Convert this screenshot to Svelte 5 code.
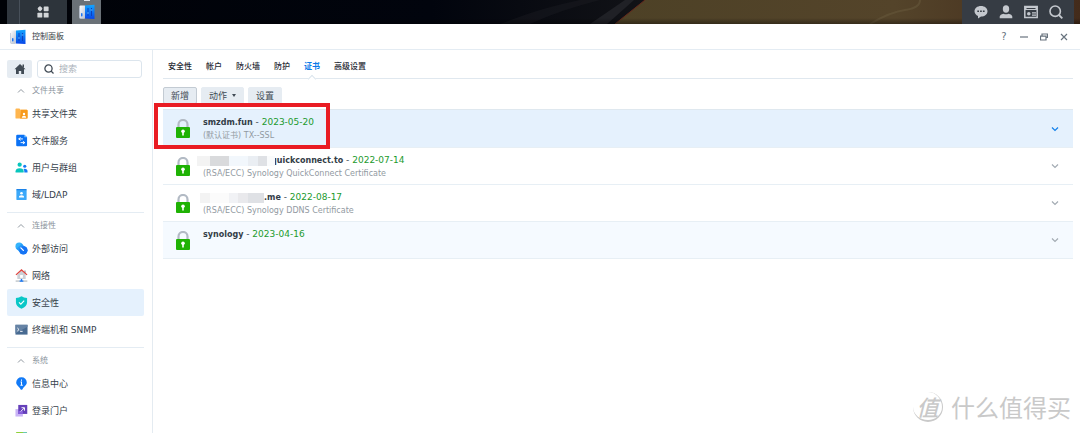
<script>
  const groups = [
    {
      title: '文件共享',
      items: [
        { icon: 'folder', label: '共享文件夹' },
        { icon: 'service', label: '文件服务' },
        { icon: 'users', label: '用户与群组' },
        { icon: 'domain', label: '域/LDAP' }
      ]
    },
    {
      title: '连接性',
      items: [
        { icon: 'external', label: '外部访问' },
        { icon: 'network', label: '网络' },
        { icon: 'shield', label: '安全性', active: true },
        { icon: 'terminal', label: '终端机和 SNMP' }
      ]
    },
    {
      title: '系统',
      items: [
        { icon: 'info', label: '信息中心' },
        { icon: 'portal', label: '登录门户' },
        { icon: 'region', label: '' }
      ]
    }
  ];
  const tabs = ['安全性', '帐户', '防火墙', '防护', '证书', '高级设置'];
  const certs = [
    { name: 'smzdm.fun', date: '2023-05-20', note: '(默认证书) TX--SSL', state: 'selected' },
    { name: 'quickconnect.to', date: '2022-07-14', note: '(RSA/ECC) Synology QuickConnect Certificate', mask: 'wide' },
    { name: '.me', date: '2022-08-17', note: '(RSA/ECC) Synology DDNS Certificate', mask: 'narrow' },
    { name: 'synology', date: '2023-04-16', note: '', state: 'hover' }
  ];
</script>

{#snippet panelIcon()}
  <svg class="panel-icon" viewBox="0 0 16 16" aria-hidden="true">
    <defs>
      <linearGradient id="pb" x1="0" y1="0" x2="0" y2="1"><stop offset="0" stop-color="#13a5ff" /><stop offset="1" stop-color="#0745e8" /></linearGradient>
      <linearGradient id="pw" x1="0" y1="0" x2="1" y2="1"><stop offset="0" stop-color="#ffffff" /><stop offset="1" stop-color="#b3bdcf" /></linearGradient>
    </defs>
    <rect x="0.5" y="1.5" width="6" height="13" rx="1" fill="url(#pw)" />
    <path d="M.5 4v9.500q0 1 1 1h4" fill="none" stroke="#b9c3d4" stroke-width=".7" />
    <rect x="2" y="9" width="1.500" height="3.500" rx=".7" fill="#1d74f4" />
    <path d="M6 1.500 15.500.8V15L6 14.500z" fill="url(#pb)" />
    <path d="M9 4v8M12.500 4v8" stroke="#0a41bd" stroke-width="1" />
    <path d="M8.200 9h1.600M11.700 6h1.600" stroke="#6cc6ff" stroke-width="1.200" />
  </svg>
{/snippet}

{#snippet sideIcon(kind)}
  <svg class="side-icon" viewBox="0 0 14 14" aria-hidden="true">
    {#if kind === 'folder'}
      <path d="M.5 2.500q0-1 1-1h3.300l1.200 1.500h6.500q1 0 1 1V11.500q0 1-1 1h-11q-1 0-1-1z" fill="#ffb64f" />
      <path d="M6.500 3h6q1 0 1 1V11.500q0 1-1 1h-7z" fill="#f79a1c" />
      <circle cx="9.700" cy="7.500" r="1.300" fill="#fff" /><path d="M7.300 11.500q0-2 2.400-2t2.400 2z" fill="#fff" />
    {:else if kind === 'service'}
      <path d="M2.500.8H10L13 3.500V12q0 1.200-1.200 1.200H2.500q-1.200 0-1.200-1.200V2Q1.300.8 2.500.8z" fill="#0b72f5" />
      <path d="M10 .8 13 3.500h-3z" fill="#75c0ff" />
      <path d="M6 3.800 4 5.300l2 1.500M4 5.300h4.500M8.500 7.800l2 1.500-2 1.500M10.500 9.300H6" fill="none" stroke="#fff" stroke-width="1" />
    {:else if kind === 'users'}
      <circle cx="5" cy="4" r="2.300" fill="#08c6bd" /><path d="M.6 12.500V11Q.8 7.700 5 7.700T9.300 11v1.500z" fill="#08c6bd" />
      <circle cx="10.500" cy="5.700" r="1.700" fill="#147bf5" /><path d="M9 8.600q4.500-.7 4.500 2.700v1.200H10V11Q10 9.500 9 8.600z" fill="#147bf5" />
    {:else if kind === 'domain'}
      <rect x="1.500" y="1" width="11" height="12" rx="1" fill="#3ba8f9" /><path d="M1.500 2.500V2q0-1 1-1h9q1 0 1 1v.500z" fill="#1c82e8" />
      <circle cx="7" cy="5.700" r="1.400" fill="#fff" /><path d="M4.200 10.300q0-2.600 2.800-2.600t2.800 2.600z" fill="#fff" />
    {:else if kind === 'external'}
      <circle cx="4.500" cy="4.500" r="4" fill="#35b4fc" /><circle cx="9" cy="9" r="4.500" fill="#1574f5" />
      <path d="M1.500 7.300 6.500 12.500 10.500 5 7.300 1.800z" fill="#269af9" /><circle cx="9" cy="9" r="4.300" fill="#1574f5" />
      <path d="M6.300 6.300 9 9" stroke="#fff" stroke-width="1.400" stroke-linecap="round" />
    {:else if kind === 'network'}
      <path d="M2.500 6 7 2l4.500 4v4.800h-9z" fill="#cbd0d6" /><path d="M10 1.500h1.500v3H10z" fill="#a3a8ae" />
      <path d="M1 6.300 7 1l6 5.300" fill="none" stroke="#df453f" stroke-width="1.300" />
      <rect x="5.500" y="6.500" width="3" height="3" fill="#fff" /><path d="M.7 13h12.600" stroke="#9ea6ad" stroke-width="1" /><path d="M7 10.800v2M5 13h4" stroke="#1675f4" stroke-width="1.500" />
    {:else if kind === 'shield'}
      <path d="M7 .4Q9.500 2 13 2.200V7q0 4.200-6 6.800Q1 11.200 1 7V2.200Q4.500 2 7 .4z" fill="#0ac7c7" /><path d="M4.300 6.800 6.300 8.800 9.900 5" stroke="#fff" stroke-width="1.200" fill="none" />
    {:else if kind === 'terminal'}
      <path d="M.5 2h13v10.500H.5z" fill="#486a91" /><path d="M.5 2h13v2L.5 11z" fill="#6683a5" /><path d="M2.500 5.300 4.300 7 2.500 8.700M5.500 9h2.700" fill="none" stroke="#fff" />
    {:else if kind === 'info'}
      <path d="M7 .3a5.600 5.600 0 0 1 5.700 5.600c0 3-3 4.200-4.500 6.900Q7 14.600 5.800 12.800C4.300 10.100 1.300 8.900 1.300 5.900A5.600 5.600 0 0 1 7 .3z" fill="#127af7" /><path d="M7 2.700v1.400M6 5.500h1v3M5.800 8.800h2.600" stroke="#fff" fill="none" stroke-width="1.100" />
    {:else if kind === 'portal'}
      <path d="M.5 5.500h8v8h-8z" fill="#c9b3f6" /><path d="M3.500 1h9.700v9.700H3.500z" fill="#6540ba" /><path d="M3.500 7.500h5v3.200h-5z" fill="#8860dc" /><path d="M6.200 8 10 4.200M7 4h3.200v3.200" fill="none" stroke="#fff" />
    {:else}
      <rect x="1" y="1" width="12" height="12" rx="1" fill="#8fd03a" /><path d="M8 1h4q1 0 1 1v4z" fill="#68c8b8" />
    {/if}
  </svg>
{/snippet}

<div class="screen">
  <header class="taskbar">
    <svg class="wallpaper" viewBox="0 0 1080 24" preserveAspectRatio="none" aria-hidden="true">
      <defs>
        <linearGradient id="night"><stop offset="0" stop-color="#000207" /><stop offset=".4" stop-color="#01040d" /><stop offset=".6" stop-color="#121317" /></linearGradient>
        <linearGradient id="sand"><stop offset="0" stop-color="#4d4126" /><stop offset=".6" stop-color="#54442a" /><stop offset="1" stop-color="#432b1b" /></linearGradient>
        <linearGradient id="shade" x1="0" x2="0" y1="0" y2="1"><stop offset=".75" stop-opacity="0" /><stop offset="1" stop-opacity=".35" /></linearGradient>
      </defs>
      <path d="M0 0h1080v24H0z" fill="url(#night)" />
      <path d="M500 24Q540 8 580 0h20Q560 10 530 24z" fill="#24262b" opacity=".3" />
      <path d="M590 24 625 0h9L607 24z" fill="#24262b" opacity=".8" />
      <path d="M645 0h435v24H615z" fill="url(#sand)" />
      <path d="M645 0 615 24" stroke="#65291c" />
      <path d="M870 24Q890 12 905 10T920 0" stroke="#65563a" stroke-width="2" fill="none" opacity=".6" />
      <path d="M0 0h1080v24H0z" fill="url(#shade)" />
    </svg>
    <button class="launcher" aria-label="主菜单">
      <svg viewBox="0 0 12 12" aria-hidden="true"><path d="M3 0 5.500 2.750 3 5.500.5 2.750z" /><circle cx="3" cy="2.750" r="2.100" /><rect x="6.700" y=".4" width="4.900" height="4.900" rx=".7" /><rect x=".4" y="6.700" width="4.900" height="4.900" rx=".7" /><rect x="6.700" y="6.700" width="4.900" height="4.900" rx=".7" /></svg>
    </button>
    <button class="running" aria-label="控制面板">{@render panelIcon()}</button>
    <div class="tray">
      <button aria-label="通知"><svg viewBox="0 0 14 14" aria-hidden="true"><path d="M7 1c3.700 0 6.500 2.200 6.500 5.300S10.700 11.600 7 11.600L4 13.500V11C2 10.200.5 8.400.5 6.300.5 3.200 3.300 1 7 1z" /><path d="M3.300 5.500h1.700v1.500H3.300zM6.100 5.500h1.700v1.500H6.100zM8.900 5.500h1.700v1.500H8.900z" fill="#363c44" /></svg></button>
      <button aria-label="用户"><svg viewBox="0 0 14 14" aria-hidden="true"><ellipse cx="7" cy="4" rx="3.200" ry="3.700" /><path d="M.7 13.200V11.500Q1 9.500 4.500 8.700q2.500 1.300 5 0 3.500.8 3.800 2.800v1.700z" /></svg></button>
      <button aria-label="小工具"><svg viewBox="0 0 14 14" aria-hidden="true"><path d="M.8 1.500h12.400v11H.8z" fill="none" stroke="#c4c8ce" stroke-width="1.500" /><path d="M1 1h12v4H1z" /><path d="M2.500 3.500h9" stroke="#363c44" /><circle cx="4.800" cy="8.800" r="1.800" /><path d="M8 7.800h4M8 10.200h4" stroke="#c4c8ce" stroke-width="1.300" /></svg></button>
      <button aria-label="搜索"><svg viewBox="0 0 14 14" aria-hidden="true"><circle cx="6.200" cy="6.200" r="5.200" fill="none" stroke="#c4c8ce" stroke-width="1.600" /><path d="M10 10 13.300 13.300" stroke="#c4c8ce" stroke-width="1.800" /></svg></button>
    </div>
  </header>

  <div class="titlebar">
    {@render panelIcon()}
    <h1>控制面板</h1>
    <div class="window-controls">
      <button aria-label="帮助">?</button>
      <button aria-label="最小化"><svg viewBox="0 0 8 8" aria-hidden="true"><path d="M0 4h8" /></svg></button>
      <button aria-label="还原"><svg viewBox="0 0 8 8" aria-hidden="true"><path d="M2 2.500V1h5.500v3.500H6M.5 3.200H6V7H.5z" /></svg></button>
      <button aria-label="关闭"><svg viewBox="0 0 8 8" aria-hidden="true"><path d="M1 1l6 6M7 1 1 7" /></svg></button>
    </div>
  </div>

  <div class="body">
    <aside>
      <div class="side-top">
        <button class="home" aria-label="主页"><svg viewBox="0 0 12 12" aria-hidden="true"><path d="M6 1 11.500 6.300H10V11H7.200V8H4.800v3H2V6.300H.5z" /><path d="M8.500 1.500H10v3H8.500z" /></svg></button>
        <label class="search">
          <svg viewBox="0 0 10 10" aria-hidden="true"><circle cx="4.500" cy="4.500" r="3.600" /><path d="M7 7 9.500 9.500" /></svg>
          <input type="text" placeholder="搜索" aria-label="搜索" />
        </label>
      </div>
      <nav>
        {#each groups as group}
          <section>
            <button class="group-title"><svg viewBox="0 0 8 6" aria-hidden="true"><path d="M1 4.500 4 1.500l3 3" /></svg>{group.title}</button>
            {#each group.items as item}
              <a href="#panel" class:active={item.active}>{@render sideIcon(item.icon)}<span>{item.label}</span></a>
            {/each}
          </section>
        {/each}
      </nav>
    </aside>

    <main id="panel">
      <div class="tabs" role="tablist">
        {#each tabs as tab}
          <button role="tab" aria-selected={tab === '证书'}>{tab}</button>
        {/each}
      </div>
      <div class="toolbar">
        <button class="focused">新增</button>
        <button>动作<i></i></button>
        <button>设置</button>
      </div>
      <ul>
        {#each certs as cert}
          <li class={cert.state}>
            <svg class="lock" viewBox="0 0 14 19" aria-hidden="true"><path d="M2.500 9V5.500a4.500 4.500 0 0 1 9 0V9" fill="none" stroke="#b2bac4" stroke-width="2.200" /><rect y="8" width="14" height="11" rx="1" fill="#1fb204" /><circle cx="7" cy="12.300" r="1.800" fill="#fff" /><path d="M6.200 13h1.600v3.500H6.200z" fill="#fff" /></svg>
            <div class="info">
              <p>
                {#if cert.mask}<span class="mask {cert.mask}"></span>{/if}<b>{cert.name}</b> - <time>{cert.date}</time>
              </p>
              {#if cert.note}<p class="note">{cert.note}</p>{/if}
            </div>
            <button class="expand" aria-label="展开"><svg viewBox="0 0 8 6" aria-hidden="true"><path d="M1 1.500l3 3 3-3" /></svg></button>
            {#if cert.state === 'selected'}<div class="highlight"></div>{/if}
          </li>
        {/each}
      </ul>
    </main>
  </div>

  <div class="watermark"><span class="seal">值</span><span>什么值得买</span></div>
</div>

<style>
  :global(body) { margin: 0; background: #fff; }
  .screen {
    position: relative;
    display: flex;
    flex-direction: column;
    height: 100vh;
    overflow: hidden;
    background: #fff;
    color: #414b55;
    font: 9px/12px "DejaVu Sans", "Noto Sans CJK SC", sans-serif;
  }
  button { border: 0; margin: 0; padding: 0; background: none; color: inherit; font: inherit; }
  svg { display: block; flex: none; }
  p, h1, ul { margin: 0; padding: 0; }
  h1 { font-size: 8px; font-weight: 400; color: #333b44; }

  .taskbar { position: relative; display: flex; flex: none; height: 24px; background: #000; overflow: hidden; }
  .wallpaper { position: absolute; inset: 0; width: 100%; height: 100%; }
  .taskbar button, .tray { position: relative; display: flex; align-items: center; justify-content: center; }
  .launcher { width: 48px; margin-left: 7px; border-left: 12px solid #30373f; background: #2d343b; box-shadow: inset 1px 0 #48505a; box-sizing: content-box; }
  .launcher svg { width: 12px; height: 12px; fill: #d2d5d8; }
  .running { width: 29px; margin-left: 5px; background: #6a7177; }
  .running::before { content: ""; position: absolute; top: 0; left: 12px; width: 6px; height: 1px; background: #e3e5e8; }
  .panel-icon { width: 16px; height: 16px; }
  .tray { gap: 11px; width: 112px; margin-left: auto; margin-right: 6px; background: #363c44; }
  .tray svg { width: 14px; height: 14px; fill: #c4c8ce; }

  .titlebar { display: flex; flex: none; align-items: center; gap: 6px; height: 25px; padding: 0 10px; border-bottom: 1px solid #e4ecf3; }
  .window-controls { display: flex; gap: 8px; margin-left: auto; }
  .window-controls button { display: flex; align-items: center; justify-content: center; width: 12px; height: 12px; color: #68737e; font-size: 10px; }
  .window-controls svg { width: 8px; height: 8px; fill: none; stroke: #68737e; stroke-width: 1.2; }

  .body { display: flex; flex: 1; min-height: 0; }
  aside { flex: none; width: 153px; padding: 10px 8px 0 7px; border-right: 1px solid #e4ebf1; box-sizing: border-box; }
  .side-top { display: flex; gap: 5px; height: 18px; padding-right: 2px; }
  .home { display: flex; align-items: center; justify-content: center; width: 25px; border-radius: 2px; background: #e6ecf2; }
  .home svg { width: 12px; height: 12px; fill: #414b55; }
  .search { display: flex; flex: 1; min-width: 0; align-items: center; gap: 5px; padding-left: 6px; border: 1px solid #dce5ed; border-radius: 3px; box-sizing: border-box; }
  .search svg { width: 10px; height: 10px; fill: none; stroke: #414b55; stroke-width: 1.3; }
  .search input { flex: 1; min-width: 0; border: 0; padding: 0; background: none; font: inherit; outline: 0; }
  .search input::placeholder { color: #aab2ba; opacity: 1; }

  nav { padding-top: 4px; }
  section + section { margin-top: 4px; padding-top: 4px; border-top: 1px solid #e4ecf3; }
  .group-title { display: flex; align-items: center; gap: 7px; height: 18px; padding-left: 10px; color: #8a939c; font-size: 8px; }
  .group-title svg { width: 8px; height: 6px; fill: none; stroke: #929aa2; }
  nav a { display: flex; align-items: center; gap: 4px; height: 27px; padding-left: 8px; border-radius: 2px; color: #36414b; text-decoration: none; white-space: nowrap; }
  nav a.active { background: #e5f1fd; }
  .side-icon { width: 13px; height: 13px; }

  main { flex: 1; min-width: 0; padding: 7px 7px 0 10px; }
  .tabs { display: flex; gap: 14px; height: 21px; padding-left: 5px; border-bottom: 1px solid #e0e8ef; font-size: 8px; color: #1f2933; }
  .tabs button { position: relative; height: 19px; font-weight: 500; }
  .tabs [aria-selected="true"] { color: #0b7be8; font-weight: 700; }
  .tabs [aria-selected="true"]::after { content: ""; position: absolute; left: 50%; bottom: -6px; width: 5px; height: 5px; margin-left: -3px; border: solid #dbe5ed; border-width: 1px 0 0 1px; background: #fff; transform: rotate(45deg); }
  .toolbar { display: flex; gap: 4px; padding: 8px 0 5px; }
  .toolbar button { display: flex; align-items: center; gap: 5px; height: 17px; padding: 0 7px; border: 1px solid #e6ecf2; border-radius: 2px; background: #e6ecf2; color: #414b55; font-size: 9px; }
  .toolbar .focused { border-color: #c3cbd3; }
  .toolbar i { border: 2px solid transparent; border-top: 3px solid #414b55; border-bottom: 0; }

  ul { list-style: none; border-top: 1px solid #dfe8ef; }
  li { position: relative; display: flex; height: 37px; padding: 0 14px 0 13px; border-bottom: 1px solid #e7eff5; box-sizing: border-box; }
  li.selected { height: 38px; background: #e5f1fd; }
  .hover { background: #f5faff; }
  .lock { width: 14px; height: 19px; margin-top: 9px; }
  .info { flex: 1; margin-left: 13px; padding-top: 5px; line-height: 14px; white-space: nowrap; color: #414b55; }
  .info p { height: 14px; }
  b { color: #333d47; font-size: 8px; }
  time { color: #1c9a2d; }
  .info .note { color: #929aa2; font-size: 8px; }
  .mask { position: relative; z-index: 1; display: inline-block; height: 10px; vertical-align: middle; }
  .wide { width: 78px; margin: 0 -4px 0 -6px; background: linear-gradient(90deg, #f3f3f3 13px, #d9dadc 13px 32px, #f2f7fc 32px 51px, #eaeef3 51px 61px, #dfe1e5 61px 70px, #fafbfc 70px); }
  .narrow { width: 64px; margin-left: -3px; background: linear-gradient(90deg, #f3f3f3 10px, #fbfbfb 10px 29px, #f1f2f5 29px 38px, #e9e9ec 38px 48px, #dfe1e5 48px); }
  .expand { align-self: center; }
  .expand svg { width: 8px; height: 6px; fill: none; stroke: #a3abb3; stroke-width: 1.2; }
  .selected .expand svg { stroke: #1280ea; }
  .highlight { position: absolute; top: -7px; left: -9px; width: 168px; height: 38px; border: 4px solid #e91c23; pointer-events: none; }

  .watermark { position: absolute; right: 9px; bottom: 10px; display: flex; align-items: center; gap: 8px; color: #c9c9c9; font: 400 24px/32px "Noto Sans CJK SC", sans-serif; pointer-events: none; }
  .seal { width: 30px; height: 30px; border-right: 1px solid #c9c9c9; border-bottom: 2px solid #c9c9c9; border-radius: 50%; box-sizing: border-box; font-size: 22px; font-weight: 500; font-style: italic; line-height: 28px; text-align: center; }
</style>
